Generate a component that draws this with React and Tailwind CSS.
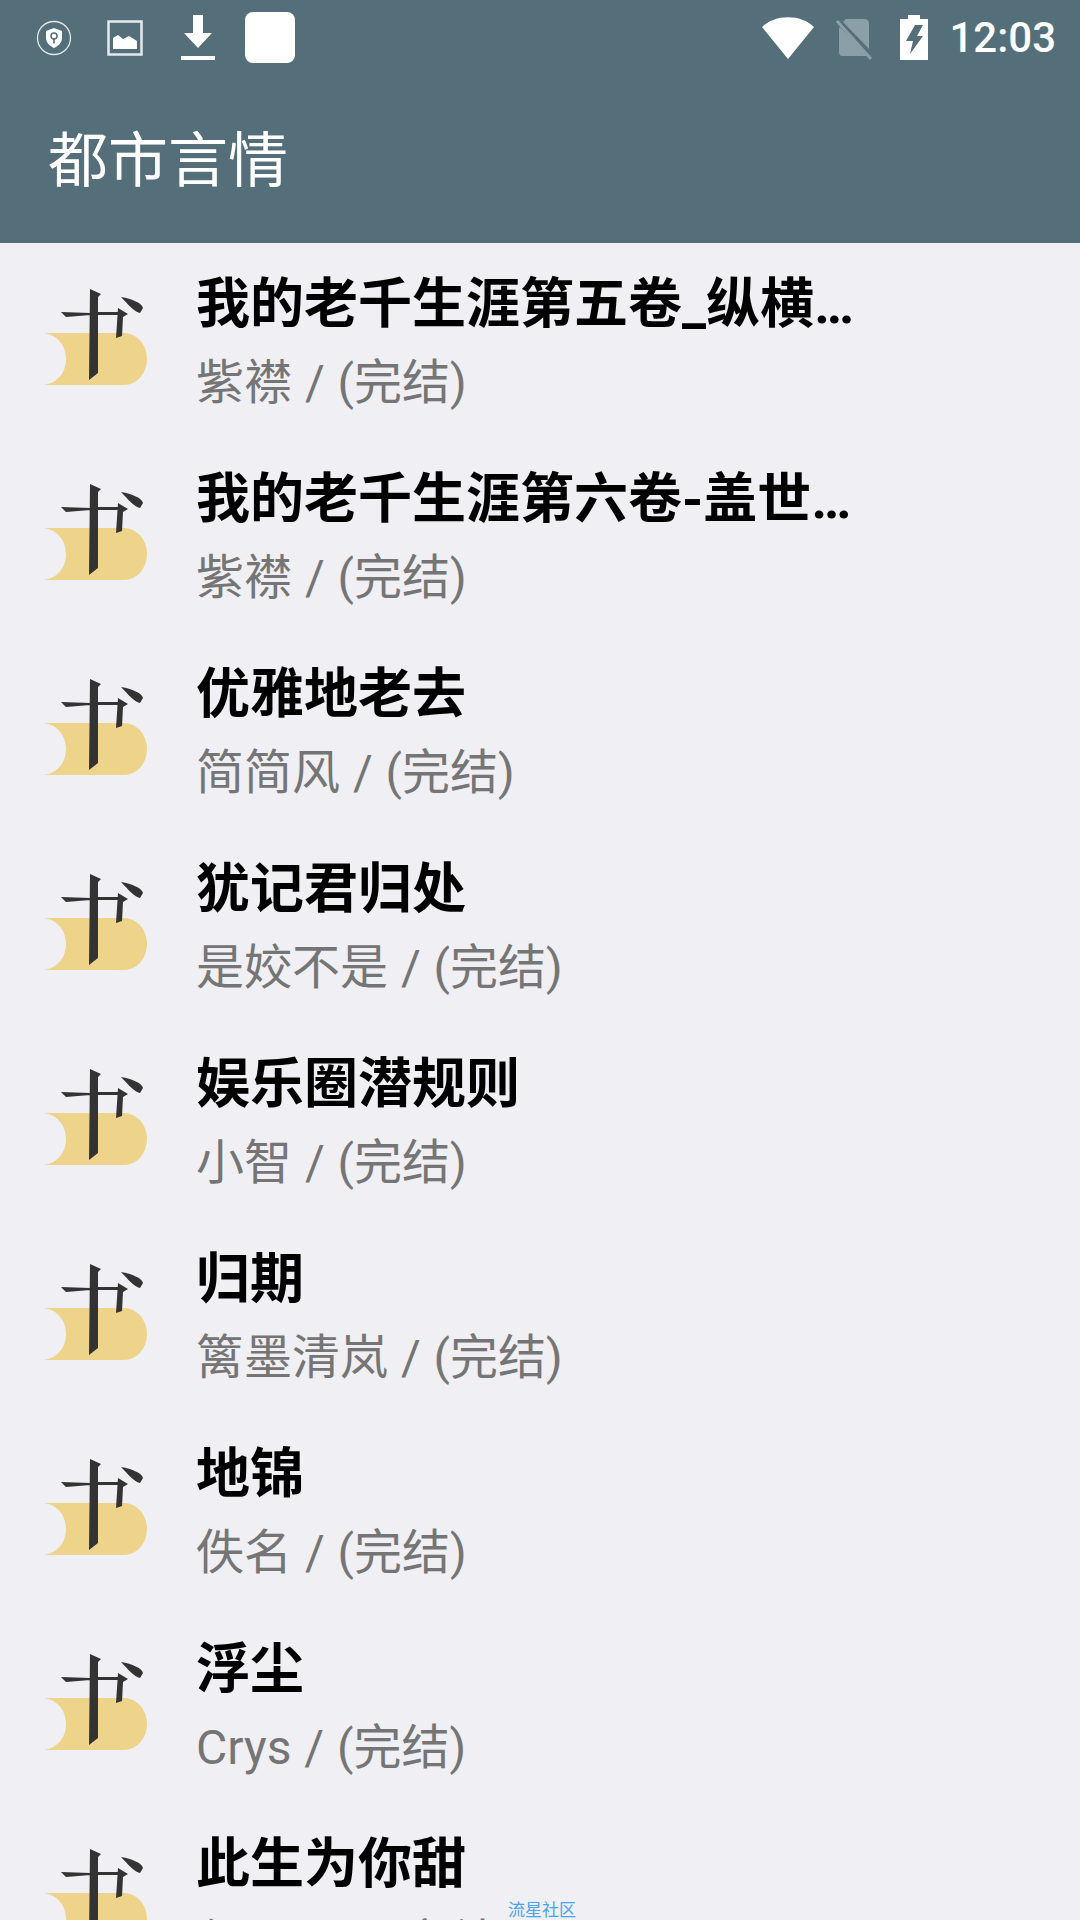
import React from "react";

const books = [
  ["我的老千生涯第五卷_纵横中文网", "紫襟 / (完结)"],
  ["我的老千生涯第六卷-盖世赌神", "紫襟 / (完结)"],
  ["优雅地老去", "简简风 / (完结)"],
  ["犹记君归处", "是姣不是 / (完结)"],
  ["娱乐圈潜规则", "小智 / (完结)"],
  ["归期", "篱墨清岚 / (完结)"],
  ["地锦", "佚名 / (完结)"],
  ["浮尘", "Crys / (完结)"],
  ["此生为你甜", "叙丽风 / (完结)"],
];

const BookIcon = () => (
  <svg width="130" height="130" viewBox="0 0 130 130" className="mb-[11px] shrink-0">
    <path d="M14 63 H94 A 23 26 0 0 1 94 115 H14 C 28 113 36 102 36 89 C 36 76 28 65 14 63 Z" fill="#edd48a" />
    <path d="M60 19 L71 24 L68 27 L68 42 H88 L88 45 L68 45 L68 103 L59 110 Z M31 42 L60 43 V45 L36 47 Z" fill="#333" />
    <path d="M91 27 C 102 29 112 33 113 38 L110 43 C 104 42 98 34 91 27 Z" fill="#333" />
    <path d="M88 38 L98 44 L93 47 L92 66 L86 68 Z" fill="#333" />
  </svg>
);

const BookRow = ({ title, sub }) => (
  <div className="flex h-[195px] shrink-0 items-center pl-[30px] pr-[200px]">
    <BookIcon />
    <div className="ml-[36px] min-w-0 flex-1 pt-[3px]">
      <div className="truncate text-[54px] font-bold leading-[72px] text-black">{title}</div>
      <div className="mt-[9px] truncate text-[48px] leading-[66px] text-[#757575] [word-spacing:1px]">{sub}</div>
    </div>
  </div>
);

const StatusBar = () => (
  <div className="flex h-[75px] items-center text-white">
    <svg width="36" height="36" viewBox="0 0 36 36" className="ml-[36px]">
      <circle cx="18" cy="18" r="16.5" fill="none" stroke="#e3e8ea" strokeWidth="1.3" />
      <path d="M18 8 L26 11 V18 C26 23 22 26 18 28 C14 26 10 23 10 18 V11 Z" fill="#fff" />
      <circle cx="18" cy="16" r="3" fill="none" stroke="#546e7a" strokeWidth="1.5" />
      <rect x="17.2" y="18.5" width="1.6" height="5" fill="#546e7a" />
    </svg>
    <svg width="36" height="36" viewBox="0 0 36 36" className="ml-[35px]">
      <rect x="1.5" y="1.5" width="33" height="33" fill="none" stroke="#e6eaec" strokeWidth="2.5" />
      <path d="M6 29 V18 L11 15 L16 19 L22 16 L30 21 V29 Z" fill="#fff" />
    </svg>
    <svg width="36" height="48" viewBox="0 0 36 48" className="ml-[37px] mt-[2px]">
      <path d="M13 0 H23 V18 H32 L18 33 L4 18 H13 Z" fill="#fff" />
      <rect x="1" y="41" width="34" height="4" fill="#fff" />
    </svg>
    <div className="ml-[29px] h-[51px] w-[50px] rounded-[8px] bg-white" />
    <svg width="56" height="44" viewBox="0 0 56 44" className="ml-auto">
      <path d="M2 11 C 15 -2 41 -2 54 11 L28 43 Z" fill="#fff" />
    </svg>
    <svg width="40" height="44" viewBox="0 0 40 44" className="ml-[18px]">
      <path d="M12 3 H30 C33 3 35 5 35 7 V33 L9 6 Z M6 11 L34 40 H8 C6 40 5 38 5 36 V12 Z" fill="#8b9fa8" />
      <path d="M3 5 L37 43" stroke="#8b9fa8" strokeWidth="3" />
    </svg>
    <svg width="30" height="45" viewBox="0 0 30 45" className="ml-[25px]">
      <path d="M9 0 H21 V4 H29 V45 H1 V4 H9 Z" fill="#fff" />
      <path d="M16 10 H24 L18 21 H24 L11 39 L14 26 H7 Z" fill="#546e7a" />
    </svg>
    <div className="ml-[20px] mr-[24px] font-['Roboto',sans-serif] text-[42px] font-medium leading-none">12:03</div>
  </div>
);

export default function App() {
  return (
    <div className="relative flex h-[1920px] w-[1080px] flex-col overflow-hidden bg-[#efeff4] font-['Roboto','Noto_Sans_CJK_SC',sans-serif]">
      <div className="h-[243px] shrink-0 bg-[#546e7a]">
        <StatusBar />
        <div className="pl-[48px] pt-[47px] text-[60px] leading-[80px] text-white">都市言情</div>
      </div>
      <div className="flex flex-col">
        {books.map(([title, sub], i) => (
          <BookRow key={i} title={title} sub={sub} />
        ))}
      </div>
      <div className="absolute left-[508px] top-[1900px] text-[17px] leading-[20px] text-[#4aa3f0]">流星社区</div>
    </div>
  );
}
